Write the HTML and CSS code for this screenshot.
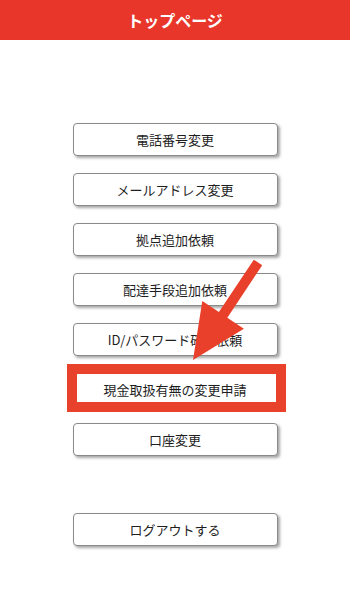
FILE: index.html
```html
<!DOCTYPE html>
<html lang="ja">
<head>
<meta charset="utf-8">
<link rel="stylesheet" href="styles.css">
</head>
<body>
<div class="page">
  <header class="topbar"><h1 class="title">トップページ</h1></header>
  <nav class="menu">
    <div class="btn">電話番号変更</div>
    <div class="btn">メールアドレス変更</div>
    <div class="btn">拠点追加依頼</div>
    <div class="btn">配達手段追加依頼</div>
    <div class="btn">ID/パスワード確認依頼</div>
    <div class="btn btn-highlight">現金取扱有無の変更申請</div>
    <div class="btn">口座変更</div>
  </nav>
  <div class="logout-wrap">
    <div class="btn">ログアウトする</div>
  </div>
  <svg class="arrow" viewBox="0 0 350 596" width="350" height="596">
    <polygon fill="#e8402b" points="253.8,259.7 262.2,265.3 227.3,317.7 243.9,328.8 193,360 202.3,301 218.9,312.1"/>
  </svg>
</div>
</body>
</html>
```

FILE: styles.css
```css
html, body {
  margin: 0;
  padding: 0;
  background: #ffffff;
}
body {
  font-family: "Noto Sans CJK JP", "Noto Sans", sans-serif;
  color: #1e1e1e;
}
.page {
  position: relative;
  width: 350px;
  height: 596px;
  overflow: hidden;
}
.topbar {
  height: 40px;
  background: #e8372a;
  display: flex;
  align-items: center;
  justify-content: center;
}
.title {
  margin: 0;
  color: #ffffff;
  font-size: 16px;
  font-weight: 700;
  line-height: 1;
}
.menu {
  display: flex;
  flex-direction: column;
  align-items: center;
  gap: 17px;
  padding-top: 83px;
}
.btn {
  position: relative;
  box-sizing: border-box;
  width: 205px;
  height: 33px;
  border: 1px solid #8a8a8a;
  border-radius: 4px;
  background: #ffffff;
  box-shadow: 2px 2px 3px rgba(0, 0, 0, 0.35);
  display: flex;
  align-items: center;
  justify-content: center;
  font-size: 13px;
  line-height: 1;
}
.btn-highlight {
  box-shadow: none;
  border-color: transparent;
}
.btn-highlight::before {
  content: "";
  position: absolute;
  left: -7px;
  top: -10px;
  right: -9px;
  bottom: -7px;
  border: 10px solid #e8412c;
}
.logout-wrap {
  display: flex;
  justify-content: center;
  padding-top: 57px;
}
.arrow {
  position: absolute;
  left: 0;
  top: 0;
  pointer-events: none;
}
```
